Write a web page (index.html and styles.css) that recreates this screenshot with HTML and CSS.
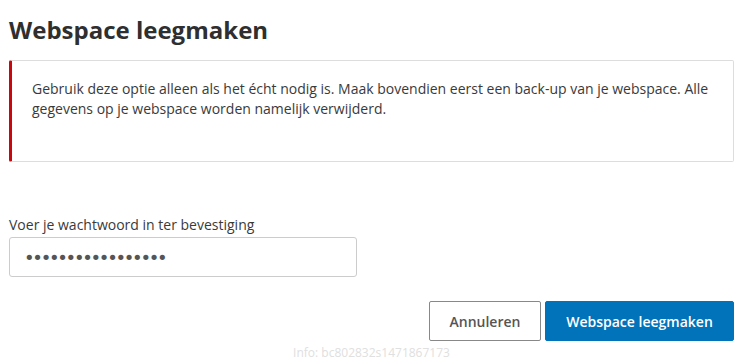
FILE: index.html
```html
<!DOCTYPE html>
<html lang="nl">
<head>
<meta charset="utf-8">
<link rel="stylesheet" href="styles.css">
</head>
<body>
<div class="page">
  <h1 class="title">Webspace leegmaken</h1>
  <div class="alert">
    <p>Gebruik deze optie alleen als het écht nodig is. Maak bovendien eerst een back-up van je webspace. Alle gegevens op je webspace worden namelijk verwijderd.</p>
  </div>
  <div class="field">
    <label class="label" for="pw">Voer je wachtwoord in ter bevestiging</label>
    <input class="input" id="pw" type="password" value="abcdefghijklmnopq">
  </div>
  <div class="actions">
    <button class="btn btn-secondary" type="button">Annuleren</button>
    <button class="btn btn-primary" type="button">Webspace leegmaken</button>
  </div>
  <div class="info">Info: bc802832s1471867173</div>
</div>
</body>
</html>
```
FILE: styles.css
```css
* { box-sizing: border-box; }
html, body { margin: 0; padding: 0; background: #fff; }
body {
  font-family: "Open Sans", "Noto Sans", sans-serif;
  color: #333;
  font-size: 14px;
}
.page {
  padding: 13px 10px 0 9px;
}
.title {
  margin: 0;
  font-size: 24px;
  font-weight: 700;
  line-height: 33px;
  color: #2f2f2f;
}
.alert {
  margin-top: 14px;
  border: 1px solid #ddd;
  border-left: 3px solid #c8070e;
  border-radius: 2px;
  padding: 18px 20px 38px 20px;
  min-height: 102px;
}
.alert p {
  margin: 0;
  line-height: 20px;
  color: #3a3a3a;
}
.field {
  margin-top: 53px;
  display: flex;
  flex-direction: column;
  align-items: flex-start;
}
.label {
  line-height: 20px;
  color: #3a3a3a;
}
.input {
  margin-top: 2px;
  width: 348px;
  height: 40px;
  border: 1px solid #ccc;
  border-radius: 3px;
  padding: 0 14px;
  font-family: "DejaVu Sans", sans-serif;
  font-size: 18px;
  letter-spacing: -2.3px;
  color: #555;
  outline: none;
}
.actions {
  margin-top: 24px;
  display: flex;
  justify-content: flex-end;
  gap: 4px;
}
.btn {
  height: 40px;
  font-family: "Open Sans", sans-serif;
  font-size: 14px;
  font-weight: 600;
  border-radius: 2px;
  padding: 0 10px;
  white-space: nowrap;
  cursor: pointer;
}
.btn-secondary {
  width: 112px;
  background: #fff;
  border: 1px solid #888;
  color: #555;
}
.btn-primary {
  width: 189px;
  background: #0073ba;
  border: 1px solid #0073ba;
  color: #fff;
}
.info {
  margin-top: 3px;
  text-align: center;
  font-size: 12px;
  line-height: 17px;
  color: #e0e0e0;
}
```
